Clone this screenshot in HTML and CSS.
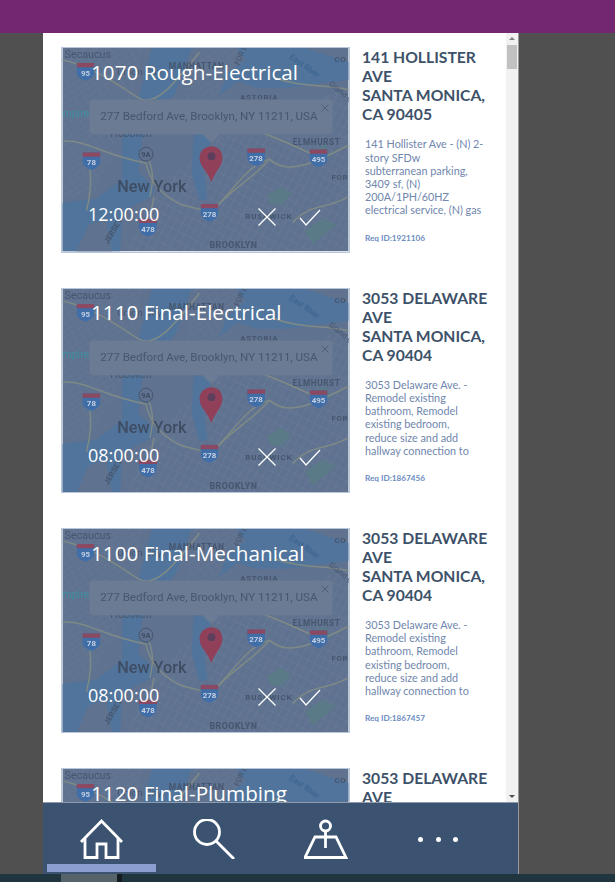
FILE: index.html
```html
<!DOCTYPE html>
<html lang="en">
<head>
    <meta charset="UTF-8">
    <title>Inspections</title>
    <link rel="stylesheet" href="styles.css">
</head>
<body>
    <!-- shared map picture, every card reuses it -->
    <svg class="defs" width="0" height="0">
        <defs>
            <pattern id="street-a" width="7" height="9" patternUnits="userSpaceOnUse" patternTransform="rotate(28)">
                <path d="M0 0H7M0 0V9" fill="none" stroke="#72839c" stroke-width=".6"/>
            </pattern>
            <pattern id="street-b" width="8" height="6" patternUnits="userSpaceOnUse" patternTransform="rotate(-32)">
                <path d="M0 0H8M0 0V6" fill="none" stroke="#6d7e97" stroke-width=".5"/>
            </pattern>
        </defs>
        <symbol id="map-shield" viewBox="0 0 14 14">
            <path d="M0 0H14V7C14 11 10 13 7 14C4 13 0 11 0 7Z" fill="#3f6ea8"/>
            <path d="M0 0H14V3.5H0Z" fill="#8c4a62"/>
        </symbol>
        <symbol id="map-art" viewBox="0 0 288 205">
            <rect width="288" height="205" fill="#5f7290"/>
            <path d="M150 88L288 40V205H60L90 150Z" fill="url(#street-a)"/>
            <path d="M0 0H80L60 90L30 150H0Z" fill="url(#street-b)"/>
            <path d="M130 0H220L150 60L122 70Z" fill="url(#street-b)"/>
            <g fill="#50749b">
                <path d="M90 0H130L114 45L100 62L80 92L76 125L92 140L90 150L60 165L58 205H0V156L34 152L60 132L60 92L74 60Z"/>
                <path d="M132 88L152 84L142 120L146 152L138 154L130 125Z"/>
                <path d="M158 48L176 34L196 40L226 40L288 32V14L244 0H176L184 12L166 26Z"/>
            </g>
            <path d="M14 205L26 178L44 172L50 205Z" fill="#5f7290"/>
            <g fill="#5a7a88">
                <path d="M206 148L220 140L230 146L222 158L210 158Z"/>
                <path d="M252 102L266 98L270 110L256 114Z"/>
                <path d="M244 184L262 172L276 178L252 198Z"/>
            </g>
            <g class="map-roads">
                <path d="M0 12C30 18 60 40 76 50S110 40 138 4M0 94C24 92 40 108 84 116C88 134 98 148 120 158L148 165C170 150 180 122 208 112C226 128 250 118 288 98"/>
                <path d="M150 168C158 150 200 126 208 112M86 180L92 150M26 113C30 130 28 150 24 164M232 176C250 156 262 164 288 150M138 72C160 66 220 92 258 110M214 30C240 40 262 36 288 42M84 108C94 124 90 140 88 150"/>
            </g>
            <g class="map-label">
                <text x="2" y="10" font-size="10.800">Secaucus</text>
                <text x="55" y="27" font-size="10">Union City</text>
                <text x="107" y="21" font-size="8.500" font-weight="700" letter-spacing=".4">MANHATTAN</text>
                <text x="179" y="52" font-size="8" font-weight="700" letter-spacing=".7">ASTORIA</text>
                <text x="232" y="98" font-size="8.300" font-weight="700" letter-spacing=".6">ELMHURST</text>
                <text x="271" y="133" font-size="8" font-weight="700" letter-spacing=".6">FOR</text>
                <text x="184" y="172" font-size="8" font-weight="700" letter-spacing=".9">BUSHWICK</text>
                <text x="148" y="202" font-size="9" font-weight="700" letter-spacing=".4">BROOKLYN</text>
                <text x="274" y="14" font-size="8" font-weight="700" letter-spacing=".6">CO</text>
                <text x="48" y="90" font-size="10.500">Hoboken</text>
                <text x="0" y="70" font-size="10.500" class="map-teal">mpire</text>
                <text x="55" y="145" font-size="16.400" font-weight="500" class="map-city">New York</text>
                <text transform="translate(178 18) rotate(-68)" font-size="8">FDR Dr</text>
                <text transform="translate(228 10) rotate(35)" font-size="8" class="map-water">East River</text>
                <text transform="translate(268 37) rotate(40)" font-size="8">Grand C</text>
                <text transform="translate(46 198) rotate(-60)" font-size="8" font-weight="700">JERSEY</text>
            </g>
            <use href="#map-shield" x="14" y="15" width="18" height="18"/>
            <use href="#map-shield" x="20" y="105" width="18" height="18"/>
            <use href="#map-shield" x="186" y="101" width="18" height="18"/>
            <use href="#map-shield" x="249" y="102" width="18" height="18"/>
            <use href="#map-shield" x="139" y="157" width="18" height="18"/>
            <use href="#map-shield" x="77" y="172" width="18" height="18"/>
            <g class="map-shield-text">
                <text x="23" y="28">95</text>
                <text x="29" y="118">78</text>
                <text x="195" y="114">278</text>
                <text x="258" y="115">495</text>
                <text x="148" y="170">278</text>
                <text x="86" y="185">478</text>
            </g>
            <circle cx="84" cy="107" r="7" fill="#5f7290" stroke="#3f4d63" stroke-width=".8"/>
            <text x="84" y="110" class="map-nine">9A</text>
            <!-- popup over the pin -->
            <path d="M31 52H268a4 4 0 0 1 4 4V83a4 4 0 0 1-4 4H158L150 96L141 87H31a4 4 0 0 1-4-4V56a4 4 0 0 1 4-4Z" fill="#6a7b93"/>
            <text x="38" y="73" class="map-popup">277 Bedford Ave, Brooklyn, NY 11211, USA</text>
            <path d="M261 57L268 64M268 57L261 64" stroke="#4f5e74" fill="none"/>
            <path d="M150 99C143 99 138 104 138 111C138 119 146 124 150 135C154 124 161 119 161 111C161 104 157 99 150 99Z" fill="#91405a"/>
            <circle cx="150" cy="109" r="4" fill="#5c3f5c"/>
        </symbol>
    </svg>

    <div class="topbar"></div>

    <div class="stage">
        <div class="phone">
            <div class="content">
                <div class="list">
                    <div class="row">
                        <div class="map-card">
                            <svg class="map-img"><use href="#map-art"/></svg>
                            <div class="map-over">
                                <div class="job-title">1070 Rough-Electrical</div>
                                <div class="job-foot">
                                    <span class="job-time">12:00:00</span>
                                    <svg class="icon-x" viewBox="0 0 18 18"><path d="M0.5 0.5L17.500 17.500M17.500 0.5L0.5 17.500"/></svg>
                                    <svg class="icon-ok" viewBox="0 0 22 17"><path d="M1 9L7 16L21 1"/></svg>
                                </div>
                            </div>
                        </div>
                        <div class="info">
                            <h3>141 HOLLISTER AVE<br>SANTA MONICA, CA 90405</h3>
                            <p class="desc">141 Hollister Ave - (N) 2-<br>story SFDw<br>subterranean parking,<br>3409 sf, (N)<br>200A/1PH/60HZ<br>electrical service, (N) gas</p>
                            <div class="req">Req ID:1921106</div>
                        </div>
                    </div>
                    <div class="row">
                        <div class="map-card">
                            <svg class="map-img"><use href="#map-art"/></svg>
                            <div class="map-over">
                                <div class="job-title">1110 Final-Electrical</div>
                                <div class="job-foot">
                                    <span class="job-time">08:00:00</span>
                                    <svg class="icon-x" viewBox="0 0 18 18"><path d="M0.5 0.5L17.500 17.500M17.500 0.5L0.5 17.500"/></svg>
                                    <svg class="icon-ok" viewBox="0 0 22 17"><path d="M1 9L7 16L21 1"/></svg>
                                </div>
                            </div>
                        </div>
                        <div class="info">
                            <h3>3053 DELAWARE AVE<br>SANTA MONICA, CA 90404</h3>
                            <p class="desc">3053 Delaware Ave. -<br>Remodel existing<br>bathroom, Remodel<br>existing bedroom,<br>reduce size and add<br>hallway connection to</p>
                            <div class="req">Req ID:1867456</div>
                        </div>
                    </div>
                    <div class="row">
                        <div class="map-card">
                            <svg class="map-img"><use href="#map-art"/></svg>
                            <div class="map-over">
                                <div class="job-title">1100 Final-Mechanical</div>
                                <div class="job-foot">
                                    <span class="job-time">08:00:00</span>
                                    <svg class="icon-x" viewBox="0 0 18 18"><path d="M0.5 0.5L17.500 17.500M17.500 0.5L0.5 17.500"/></svg>
                                    <svg class="icon-ok" viewBox="0 0 22 17"><path d="M1 9L7 16L21 1"/></svg>
                                </div>
                            </div>
                        </div>
                        <div class="info">
                            <h3>3053 DELAWARE AVE<br>SANTA MONICA, CA 90404</h3>
                            <p class="desc">3053 Delaware Ave. -<br>Remodel existing<br>bathroom, Remodel<br>existing bedroom,<br>reduce size and add<br>hallway connection to</p>
                            <div class="req">Req ID:1867457</div>
                        </div>
                    </div>
                    <div class="row">
                        <div class="map-card">
                            <svg class="map-img"><use href="#map-art"/></svg>
                            <div class="map-over">
                                <div class="job-title">1120 Final-Plumbing</div>
                            </div>
                        </div>
                        <div class="info">
                            <h3>3053 DELAWARE AVE<br>SANTA MONICA, CA 90404</h3>
                        </div>
                    </div>
                </div>
                <div class="scrollbar">
                    <span class="arrow-up"></span>
                    <span class="thumb"></span>
                    <span class="arrow-down"></span>
                </div>
            </div>
            <div class="nav">
                <div class="nav-item active">
                    <svg class="nav-icon" viewBox="0 0 44 40"><path d="M1 23L21.5 2L42 23M5 19V38.500H17V25H26V38.500H38V19"/></svg>
                    <span class="nav-bar"></span>
                </div>
                <div class="nav-item">
                    <svg class="nav-icon" viewBox="0 0 44 40"><circle cx="15" cy="13" r="12.500"/><path d="M24 22L42 40"/></svg>
                    <span class="nav-bar"></span>
                </div>
                <div class="nav-item">
                    <svg class="nav-icon" viewBox="0 0 44 40"><circle cx="21.500" cy="7" r="5"/><path d="M21.500 12V29M11 18H32L42 38.500H1Z"/></svg>
                    <span class="nav-bar"></span>
                </div>
                <div class="nav-item">
                    <div class="nav-dots"><span></span><span></span><span></span></div>
                    <span class="nav-bar"></span>
                </div>
            </div>
        </div>
    </div>

    <div class="bottom-strip">
        <span class="strip-grey"></span>
        <span class="strip-dark"></span>
    </div>
</body>
</html>
```

FILE: styles.css
```css
html, body {
    height: 100%;
}
body {
    margin: 0;
    display: flex;
    flex-direction: column;
    overflow: hidden;
    background-color: #505050;
    font-family: "Open Sans", Arial, sans-serif;
}
.defs {
    position: absolute;
}
.topbar {
    height: 33px;
    flex-shrink: 0;
    background-color: #742771;
}
.stage {
    flex-grow: 1;
    min-height: 0;
    padding-left: 43px;
    display: flex;
}
.phone {
    width: 475px;
    display: flex;
    flex-direction: column;
    background-color: white;
    border-right: 1px solid #9a9a9a;
}
.content {
    flex-grow: 1;
    min-height: 0;
    display: flex;
    overflow: hidden;
}
.list {
    flex-grow: 1;
    min-width: 0;
    padding: 14.4px 0 0 18px;
}
.row {
    height: 240.3px;
    display: flex;
}
.map-card {
    position: relative;
    width: 289px;
    height: 205.4px;
    flex-shrink: 0;
    box-sizing: border-box;
    border: 1px solid #b7c6da;
    overflow: hidden;
}
.map-img {
    display: block;
    width: 100%;
    height: 100%;
    filter: blur(.4px);
}
.map-over {
    position: absolute;
    top: 0;
    left: 0;
    right: 0;
    bottom: 0;
    color: white;
}
.job-title {
    position: absolute;
    top: 8.6px;
    left: 29px;
    font-size: 20.7px;
    line-height: 30px;
    white-space: nowrap;
}
.job-foot {
    position: absolute;
    left: 26px;
    right: 28px;
    top: 153px;
    height: 26px;
    display: flex;
    align-items: center;
}
.job-time {
    flex-grow: 1;
    font-size: 18px;
    line-height: 26px;
}
.job-foot svg {
    fill: none;
    stroke: white;
    stroke-width: 1.3;
}
.icon-x {
    width: 18px;
    height: 18px;
    margin-right: 23px;
    margin-top: 5px;
}
.icon-ok {
    width: 22px;
    height: 17px;
    margin-top: 6px;
}
.map-roads path {
    fill: none;
    stroke: #7f8a85;
    stroke-width: 1.5;
}
.map-label text {
    font-family: Roboto, Arial, sans-serif;
    fill: #46566e;
}
.map-label .map-teal {
    fill: #3f8fa0;
}
.map-label .map-city {
    fill: #3f4d63;
}
.map-label .map-water {
    fill: #35608c;
}
.map-shield-text text {
    font-family: Roboto, Arial, sans-serif;
    font-size: 8px;
    font-weight: 700;
    text-anchor: middle;
    fill: #c5d0e0;
}
.map-nine {
    font-family: Roboto, Arial, sans-serif;
    font-size: 7.5px;
    font-weight: 700;
    text-anchor: middle;
    fill: #3f4d63;
}
.map-popup {
    font-family: Roboto, Arial, sans-serif;
    font-size: 11.65px;
    fill: #46566e;
}
.info {
    width: 132px;
    flex-shrink: 0;
    padding-left: 12px;
    font-family: Lato, Arial, sans-serif;
}
.info h3 {
    margin: 1px 0 0;
    font-size: 15.7px;
    font-weight: 700;
    line-height: 19px;
    color: #3d5169;
}
.desc {
    margin: 13px 0 0 3px;
    font-size: 10.8px;
    line-height: 13.2px;
    white-space: nowrap;
    color: #6f86ad;
}
.req {
    margin: 16px 0 0 3px;
    font-size: 8.2px;
    line-height: 11px;
    font-weight: 700;
    color: #6b8cc0;
}
.scrollbar {
    width: 12px;
    flex-shrink: 0;
    margin-left: auto;
    display: flex;
    flex-direction: column;
    align-items: center;
    background-color: #f1f1f1;
}
.arrow-up {
    margin-top: 4px;
    border: 3px solid transparent;
    border-top: 0;
    border-bottom: 3px solid #808080;
}
.thumb {
    margin-top: 5px;
    width: 10px;
    height: 24px;
    background-color: #c1c1c1;
}
.arrow-down {
    margin-top: auto;
    margin-bottom: 4px;
    border: 3px solid transparent;
    border-bottom: 0;
    border-top: 3px solid #505050;
}
.nav {
    height: 72px;
    flex-shrink: 0;
    box-sizing: border-box;
    padding-left: 3px;
    display: flex;
    background-color: #3b5370;
    border-top: 1px solid #8d9bad;
}
.nav-item {
    width: 112px;
    display: flex;
    flex-direction: column;
    align-items: center;
}
.nav-icon {
    width: 44px;
    height: 40px;
    margin-top: 16px;
    fill: none;
    stroke: white;
    stroke-width: 2.800;
}
.nav-dots {
    height: 40px;
    margin-top: 16px;
    display: flex;
    align-items: center;
    gap: 12.500px;
}
.nav-dots span {
    width: 5px;
    height: 5px;
    border-radius: 50%;
    background-color: white;
}
.nav-bar {
    width: 109px;
    height: 8px;
    margin-top: 5px;
    align-self: flex-start;
    margin-left: 1px;
}
.active .nav-bar {
    background-color: #8a9fd0;
}
.bottom-strip {
    height: 8px;
    flex-shrink: 0;
    padding-left: 61px;
    display: flex;
    background-color: #1f3540;
}
.strip-grey {
    width: 56px;
    background-color: #56636a;
}
.strip-dark {
    width: 5px;
    background-color: #141c20;
}
```
